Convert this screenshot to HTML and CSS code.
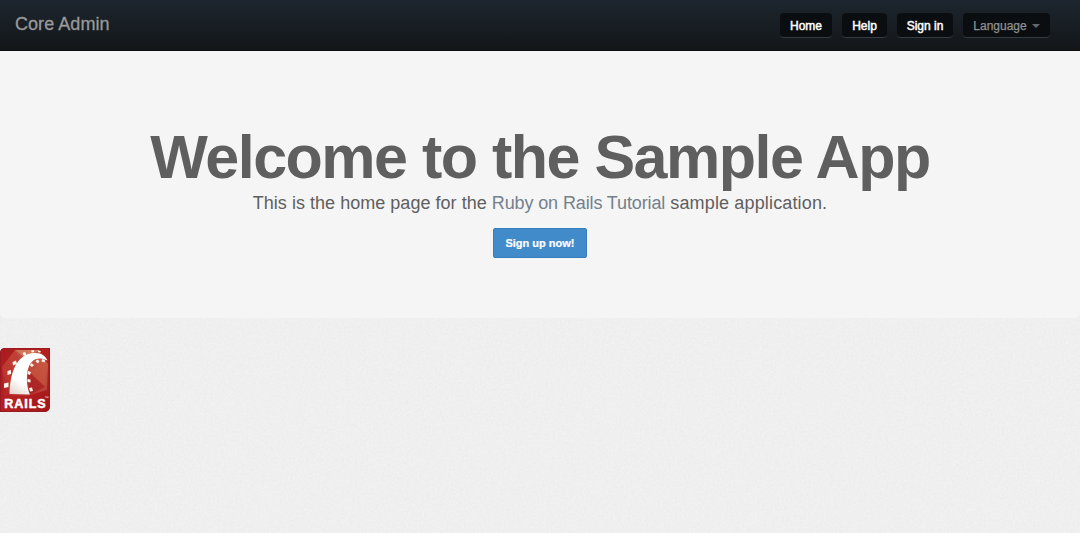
FILE: index.html
```
<!DOCTYPE html>
<html lang="en">
<head>
<meta charset="utf-8">
<title>Core Admin</title>
<link rel="stylesheet" href="styles.css">
</head>
<body>
<svg class="texture" aria-hidden="true">
  <filter id="grain" x="0" y="0" width="100%" height="100%" color-interpolation-filters="sRGB">
    <feTurbulence type="fractalNoise" baseFrequency="0.45" numOctaves="3" seed="4"/>
    <feColorMatrix values="0.035 0 0 0 0.92  0.035 0 0 0 0.92  0.035 0 0 0 0.92  0 0 0 0 1"/>
  </filter>
  <rect width="100%" height="100%" filter="url(#grain)"/>
</svg>
<header class="navbar">
  <a class="brand">Core Admin</a>
  <nav class="nav">
    <a class="nav-link home">Home</a>
    <a class="nav-link help">Help</a>
    <a class="nav-link signin">Sign in</a>
    <a class="nav-link language">Language<span class="caret"></span></a>
  </nav>
</header>
<main>
  <section class="hero">
    <h1>Welcome to the Sample App</h1>
    <h2>This is the home page for the <a>Ruby on Rails Tutorial</a> <span class="tail">sample application.</span></h2>
    <a class="btn">Sign up now!</a>
  </section>
  <a class="rails">
    <svg width="50" height="64" viewBox="0 0 50 64" role="img" aria-label="Rails">
      <defs>
        <linearGradient id="red" x1="0" y1="0" x2="1" y2="1"><stop offset="0" stop-color="#a81c20"/><stop offset=".55" stop-color="#b5201f"/><stop offset="1" stop-color="#a0161b"/></linearGradient>
        <linearGradient id="gold" x1="0" y1="1" x2="1" y2="0"><stop offset="0" stop-color="#b3222a"/><stop offset="1" stop-color="#d99a6e"/></linearGradient>
        <linearGradient id="track" x1="0" y1="1" x2=".6" y2="0"><stop offset="0" stop-color="#e3cfc6"/><stop offset=".35" stop-color="#fff"/></linearGradient>
        <clipPath id="badge"><path d="M5 0H50V58Q50 64 44 64H0V5Q0 0 5 0Z"/></clipPath>
      </defs>
      <g clip-path="url(#badge)">
        <rect width="50" height="64" fill="url(#red)"/>
        <path d="M2 19L15 2H39L48 16L47 42L27 48H4Z" fill="url(#gold)" opacity=".55"/>
        <path d="M2 19L15 2L21 17L9 45Z" fill="#c23a31" opacity=".55"/>
        <path d="M15 2H39L26 11Z" fill="#df986e" opacity=".55"/>
        <path d="M29 24L46 13L45 38Z" fill="#c9573f" opacity=".45"/>
        <path d="M28 23L45 39L29 47Z" fill="#a71c20" opacity=".7"/>
        <path d="M9.500 46C10 28 15 5 35 5C42 5 45.500 8 47.500 12.500C43 10 39 10 36 11C30 13 27.500 20 27 28C26.500 36 28 42 30 46.500Z" fill="url(#track)"/>
        <g fill="#fff3e8">
          <path d="M4 35.500L8.500 34.500V39L4 40ZM7.500 23L11 22V26L7.500 27ZM12.500 14L16 12.500L17 16L13 17.500ZM22.500 5L25 4L26.500 6.500L24 8ZM31 2.500L34 2V4L32 4.500ZM38 2.500L41 3L40 4.500L38 4Z"/>
          <path d="M28 23L31 24L30 27L27.500 26ZM27.500 31L30.500 31.500V34.500L27.500 34ZM29 40L32 39.500L33 43L30 43.500ZM31 15L34 17L32 19L30 17.500ZM37 11.500L39.500 13L38 15.500L35.500 13.500ZM42 11L45 12L44.500 14.500L41.500 13.500Z"/>
        </g>
        <path d="M.5 5Q.5.500 5 .5H49.500V58Q49.500 63.500 44 63.500H.5Z" fill="none" stroke="#991a21"/>
      </g>
      <text x="4.200" y="59.500" textLength="41.500" lengthAdjust="spacing" class="rails-word">RAILS</text>
      <text x="44.500" y="51" class="rails-tm">™</text>
    </svg>
  </a>
</main>
</body>
</html>
```
FILE: styles.css
```
* { box-sizing: border-box; }
body {
  margin: 0;
  height: 533px;
  overflow: hidden;
  background: #efefef;
  color: #5f5f5f;
  font-family: "Liberation Sans", Arial, sans-serif;
}
.texture {
  position: absolute;
  inset: 0;
  z-index: -1;
  width: 100%;
  height: 100%;
}
.navbar {
  display: flex;
  justify-content: space-between;
  align-items: flex-start;
  height: 51px;
  padding: 13px 30px 0 15px;
  background: linear-gradient(#1d262e, #121619);
  border-bottom: 1px solid #0d1012;
}
.brand {
  color: #999;
  font-size: 18px;
  line-height: 22px;
  letter-spacing: .05px;
  -webkit-text-stroke: .3px #999;
}
.nav { display: flex; gap: 10px; }
.nav-link {
  display: flex;
  align-items: center;
  justify-content: center;
  height: 25px;
  padding-top: 2px;
  border-radius: 4px;
  background: #0b0e11;
  border-bottom: 1px solid #363c41;
  color: #fff;
  font-size: 12px;
  -webkit-text-stroke: .45px #fff;
}
.home { width: 52px; }
.help { width: 45px; }
.signin { width: 56px; }
.language {
  width: 87px;
  color: #909090;
  -webkit-text-stroke: .25px #909090;
}
.caret {
  margin-left: 5px;
  border: 4px solid transparent;
  border-top-color: #62676b;
  border-bottom: 0;
}
.hero {
  height: 267px;
  padding-top: 76px;
  border-radius: 0 0 6px 6px;
  background: #f5f5f5;
  text-align: center;
}
h1 {
  margin: 0;
  font-size: 61px;
  line-height: 60px;
  letter-spacing: -1.5px;
  white-space: nowrap;
}
h2 {
  margin: 3px 0 11px;
  font-size: 18px;
  font-weight: 400;
  line-height: 27px;
  letter-spacing: .03px;
}
h2 a { color: #74808c; letter-spacing: -.12px; }
.tail { letter-spacing: .15px; }
.btn {
  display: inline-flex;
  align-items: center;
  justify-content: center;
  width: 94px;
  height: 30px;
  padding-bottom: 1px;
  border: 1px solid #357ebd;
  border-radius: 2px;
  background: #428bca;
  color: #fff;
  font-size: 11px;
  font-weight: 700;
  -webkit-text-stroke: .2px #fff;
}
.rails { display: block; width: 50px; margin-top: 30px; }
.rails svg { display: block; }
.rails-word { fill: #fff; stroke: #fff; stroke-width: .5px; font: 700 12.5px "Liberation Sans", sans-serif; }
.rails-tm { fill: #fff; font: 4px "Liberation Sans", sans-serif; }
```
